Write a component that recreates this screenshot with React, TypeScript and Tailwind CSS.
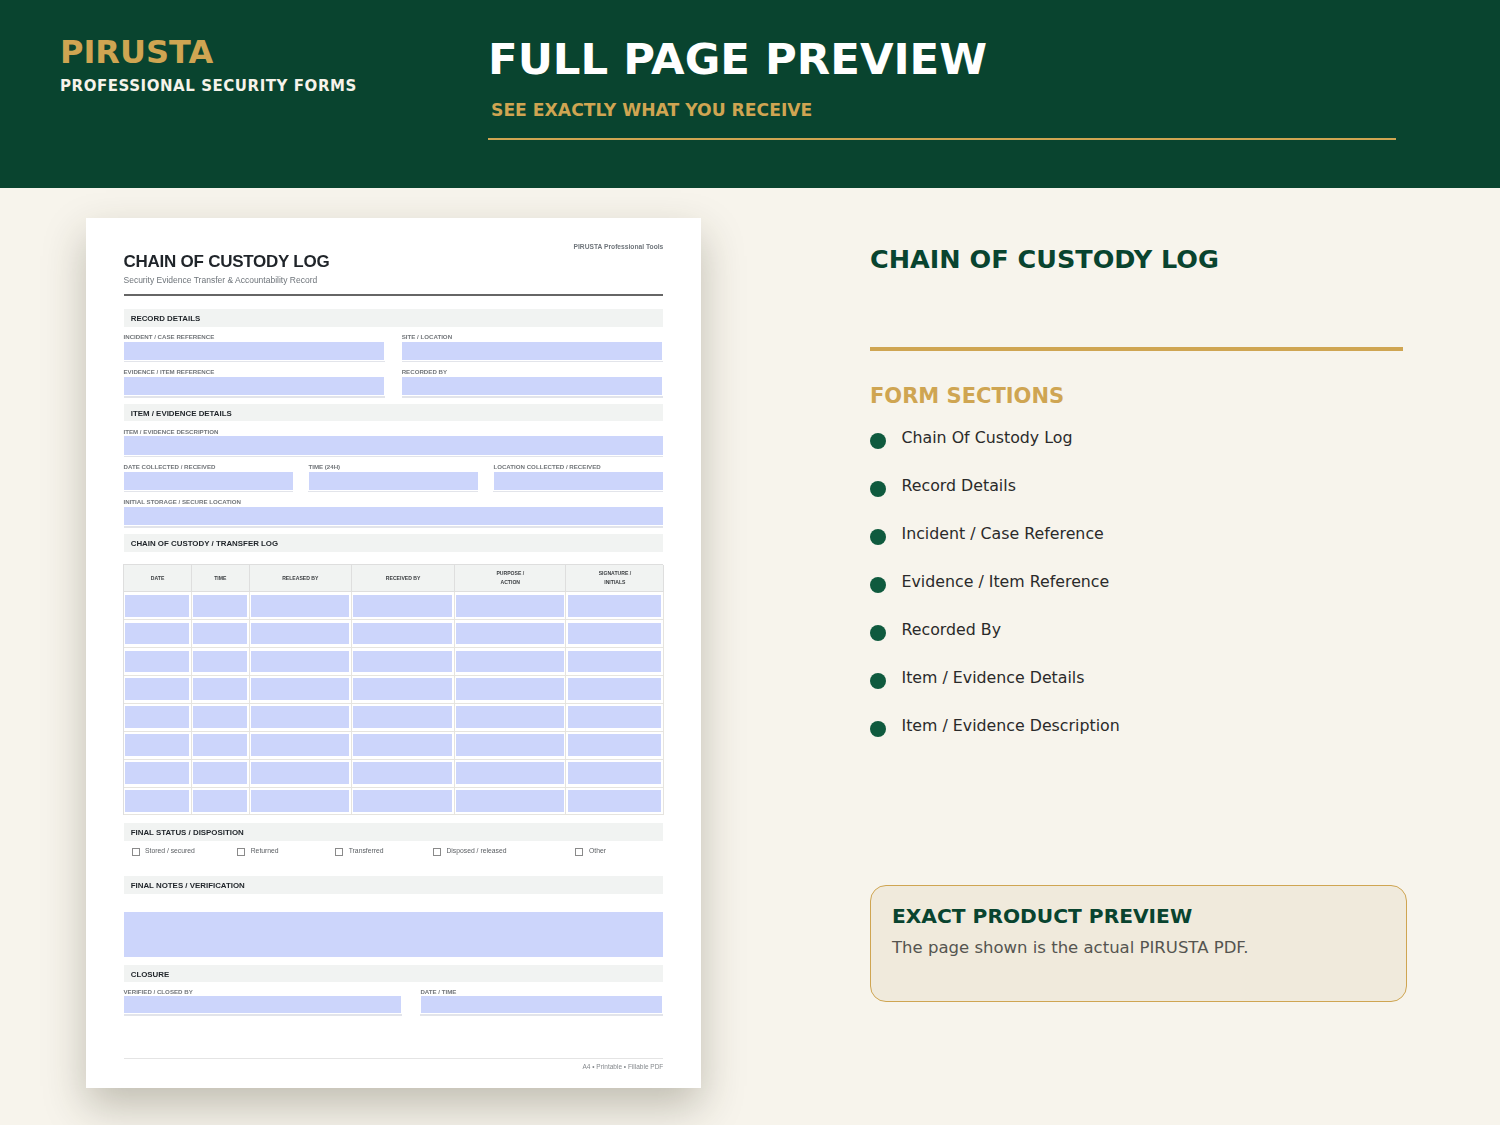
const sections = ["Chain Of Custody Log","Record Details","Incident / Case Reference","Evidence / Item Reference","Recorded By","Item / Evidence Details","Item / Evidence Description"];
const checks: [string, string][] = [["Stored / secured","w-[105.7px]"],["Returned","w-[98px]"],["Transferred","w-[97.7px]"],["Disposed / released","w-[142.6px]"],["Other","w-[60px]"]];

function Section({ title, className = "" }: { title: string; className?: string }) {
  return <div className={`h-[17.4px] bg-[#f1f3f2] pl-[7.2px] text-[7.9px] leading-[20px] font-bold text-[#1f2429] ${className}`}>{title}</div>;
}

function Field({ label, className = "" }: { label: string; className?: string }) {
  return (
    <div className={className}>
      <div className="h-[8.4px] text-[6.15px] leading-[8.5px] font-bold text-[#72767a] whitespace-nowrap">{label}</div>
      <div className="mx-[0.8px] h-[18.3px] bg-[#ccd5fb]" />
      <div className="mt-[1px] h-[1.5px] bg-[#e2e4ea]" />
      <div className="h-[6px]" />
    </div>
  );
}

function Head({ a, b }: { a: string; b?: string }) {
  return (
    <div className="flex flex-col items-center justify-center border-r border-b border-[#dedede] bg-[#f1f3f2] text-[5.1px] leading-[9px] font-bold text-[#3a3d40]">
      <span>{a}</span>
      {b && <span>{b}</span>}
    </div>
  );
}

function Table() {
  const heads: [string, string?][] = [["DATE"],["TIME"],["RELEASED BY"],["RECEIVED BY"],["PURPOSE /","ACTION"],["SIGNATURE /","INITIALS"]];
  const cells = Array.from({ length: 48 });
  return (
    <div className="mt-[12.3px] ml-[-0.4px] grid grid-cols-[68px_57.4px_102.6px_103px_111.4px_97.8px] grid-rows-[27.4px_repeat(8,27.875px)] border-t border-l border-[#dedede]">
      {heads.map(([a, b]) => <Head key={a} a={a} b={b} />)}
      {cells.map((_, i) => (
        <div key={i} className="border-r border-b border-[#e6e4df] pt-[2.4px] pr-[1.8px] pb-[2.8px] pl-[1.2px]">
          <div className="h-full bg-[#ccd5fb]" />
        </div>
      ))}
    </div>
  );
}

function Paper() {
  return (
    <div className="ml-[86px] mt-[29.5px] h-[870px] w-[614.5px] shrink-0 bg-white pr-[37.2px] pl-[37.5px] pt-[33.5px] shadow-[0_18px_40px_rgba(50,48,25,0.28)]">
      <div className="blur-[0.5px] font-['Liberation_Sans',Arial,sans-serif]">
        <div className="flex items-start justify-between">
          <div>
            <div className="text-[17px] leading-[22px] font-bold tracking-[-0.25px] text-[#1f2429] whitespace-nowrap">CHAIN OF CUSTODY LOG</div>
            <div className="mt-[2px] text-[8.5px] leading-[10px] text-[#6f757b]">Security Evidence Transfer &amp; Accountability Record</div>
          </div>
          <div className="mt-[-7.6px] text-[6.7px] leading-[8px] font-bold text-[#6f757b]">PIRUSTA Professional Tools</div>
        </div>
        <div className="mt-[9px] h-[2px] bg-[#666]" />
        <Section title="RECORD DETAILS" className="mt-[13.3px]" />
        <div className="mt-[6.6px] grid grid-cols-[261.5px_261.6px] gap-x-[16.7px]">
          <Field label="INCIDENT / CASE REFERENCE" />
          <Field label="SITE / LOCATION" />
          <Field label="EVIDENCE / ITEM REFERENCE" />
          <Field label="RECORDED BY" />
        </div>
        <Section title="ITEM / EVIDENCE DETAILS" className="mt-[0.4px]" />
        <Field label="ITEM / EVIDENCE DESCRIPTION" className="mt-[6.6px]" />
        <div className="grid grid-cols-3 gap-x-[15px]">
          <Field label="DATE COLLECTED / RECEIVED" />
          <Field label="TIME (24H)" />
          <Field label="LOCATION COLLECTED / RECEIVED" />
        </div>
        <Field label="INITIAL STORAGE / SECURE LOCATION" />
        <Section title="CHAIN OF CUSTODY / TRANSFER LOG" className="mt-[0.8px]" />
        <Table />
        <Section title="FINAL STATUS / DISPOSITION" className="mt-[7.8px]" />
        <div className="mt-[7.6px] flex h-[8px] pl-[8px]">
          {checks.map(([t, w]) => (
            <div key={t} className={`flex items-start ${w}`}>
              <div className="h-[8px] w-[8px] shrink-0 border border-[#8a8a8a]" />
              <span className="ml-[5.5px] mt-[-1px] text-[6.8px] leading-[8px] text-[#5b5f63] whitespace-nowrap">{t}</span>
            </div>
          ))}
        </div>
        <Section title="FINAL NOTES / VERIFICATION" className="mt-[20.2px]" />
        <div className="mx-[0.8px] mt-[18.4px] h-[45px] bg-[#ccd5fb]" />
        <Section title="CLOSURE" className="mt-[7.8px]" />
        <div className="mt-[5.8px] grid grid-cols-[278.3px_242.9px] gap-x-[18.6px]">
          {["VERIFIED / CLOSED BY","DATE / TIME"].map((l) => (
            <div key={l}>
              <div className="h-[8px] text-[6.15px] leading-[8px] font-bold text-[#72767a]">{l}</div>
              <div className="mx-[0.8px] h-[17px] bg-[#ccd5fb]" />
              <div className="mt-[1px] h-[1.5px] bg-[#e2e4ea]" />
            </div>
          ))}
        </div>
        <div className="mt-[42.5px] h-[1px] bg-[#e4e4e4]" />
        <div className="mt-[3.5px] text-right text-[6.5px] leading-[8px] text-[#85898d]">A4 • Printable • Fillable PDF</div>
      </div>
    </div>
  );
}

export default function App() {
  return (
    <div className="h-[1125px] w-[1500px] overflow-hidden bg-[#f7f4ec] font-['DejaVu_Sans',sans-serif]">
      <header className="flex h-[188px] bg-[#09442f]">
        <div className="w-[488px] shrink-0 pl-[60px] pt-[34px]">
          <div className="text-[32px] leading-[36px] font-bold text-[#cfa552]">PIRUSTA</div>
          <div className="mt-[6px] text-[15px] leading-[20px] font-bold tracking-[0.55px] text-[#f6f3ea]">PROFESSIONAL SECURITY FORMS</div>
        </div>
        <div className="w-[908px] pt-[33px]">
          <div className="text-[43.4px] leading-[52px] font-bold text-white">FULL PAGE PREVIEW</div>
          <div className="mt-[13px] pl-[3px] text-[17.2px] leading-[24px] font-bold text-[#cfa552]">SEE EXACTLY WHAT YOU RECEIVE</div>
          <div className="mt-[16px] h-[2px] bg-[#cfa552]" />
        </div>
      </header>
      <main className="flex items-start">
        <Paper />
        <div className="ml-[169.5px] mt-[56px] w-[537px]">
          <div className="text-[25.5px] leading-[30px] font-bold text-[#09442f]">CHAIN OF CUSTODY LOG</div>
          <div className="mt-[73px] h-[4px] w-[533px] bg-[#cfa552]" />
          <div className="mt-[32.5px] text-[21px] leading-[24px] font-bold text-[#cfa552]">FORM SECTIONS</div>
          <ul className="mt-[17.5px]">
            {sections.map((s) => (
              <li key={s} className="flex h-[48px]">
                <span className="mt-[8px] h-[16px] w-[16px] shrink-0 rounded-full bg-[#0f5a3e]" />
                <span className="ml-[15.5px] mt-[1px] text-[15.8px] leading-[24px] text-[#2a2a2a]">{s}</span>
              </li>
            ))}
          </ul>
          <div className="mt-[124px] h-[117px] rounded-[16px] border-[1.5px] border-[#cfa552] bg-[#f0eadc] pl-[21px] pt-[16.5px]">
            <div className="text-[20.2px] leading-[26px] font-bold text-[#09442f]">EXACT PRODUCT PREVIEW</div>
            <div className="mt-[8px] text-[16.5px] leading-[22px] text-[#555550]">The page shown is the actual PIRUSTA PDF.</div>
          </div>
        </div>
      </main>
    </div>
  );
}
